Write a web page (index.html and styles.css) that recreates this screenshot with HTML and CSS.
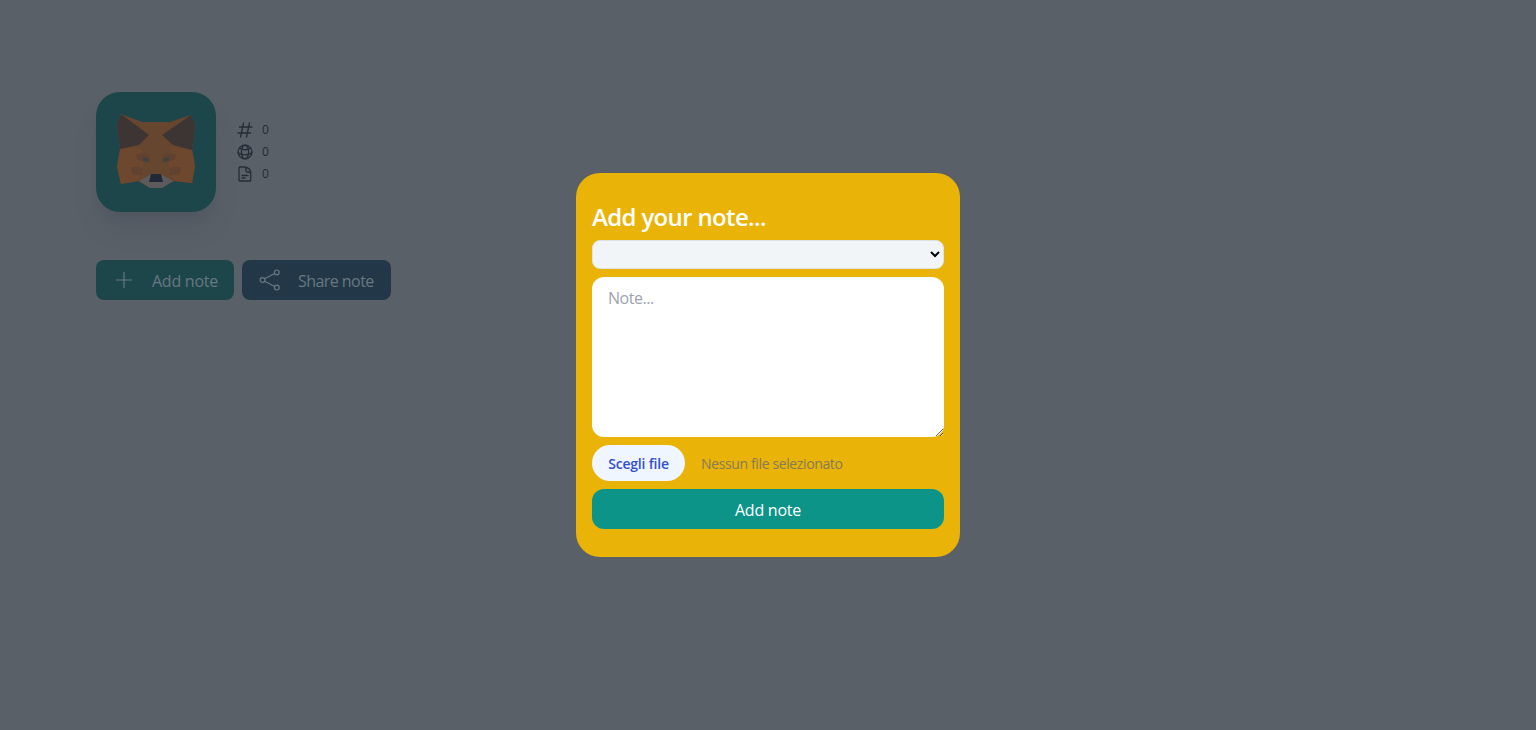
FILE: index.html
```html
<!DOCTYPE html>
<html lang="it">
<head>
<meta charset="utf-8">
<title>Notes</title>
<link rel="stylesheet" href="styles.css">
</head>
<body>
<main class="page">
  <section class="profile">
    <div class="avatar">
      <svg class="fox" viewBox="0 0 80 76">
        <path fill="#67462f" d="M5 1 26 9H54L75 2 79 12 76 37 79 52 76 70 58 68 46 75H34L22 68 5 71 1 54 4 37 1 12Z"/>
        <path fill="#6d482f" d="M4 36 24 34 30 45 22 68 5 71 1 54ZM76 36 56 34 50 45 58 68 76 70 79 54Z"/>
        <path fill="#3d3434" d="M5 1 33 22 23 32 4 36 1 12ZM75 2 46 22 57 32 76 37 79 12Z"/>
        <path fill="#61412f" d="M19 42 31 39 35 49 22 47ZM61 42 49 39 45 49 58 47ZM14 54 25 54 27 62 17 61ZM66 54 55 54 53 62 63 61Z"/>
        <path fill="#3d4142" d="M27 44 33 46 32 49 27 48ZM53 44 47 46 48 49 53 48Z"/>
        <path fill="#5c5a5b" d="M23 68 34 62H46L57 68 46 75H34Z"/>
        <path fill="#202a36" d="M35 61H45L47 69H33Z"/>
      </svg>
    </div>
    <ul class="stats">
      <li><svg class="stat-icon" viewBox="0 0 16 16"><path d="M6.5 1 3.5 15M12.5 1 9.5 15M2.5 5H15M1 11H13.5"/></svg>0</li>
      <li><svg class="stat-icon" viewBox="0 0 16 16"><circle cx="8" cy="8" r="6.9"/><ellipse cx="8" cy="8" rx="3.6" ry="6.9"/><path d="M2.5 4Q8 7.5 13.5 4M1 8.8Q8 13 15 8.8"/></svg>0</li>
      <li><svg class="stat-icon" viewBox="0 0 16 16"><path d="M3 1H7.5Q13.8 1.6 13.8 8V14Q13.8 15 12.8 15H3Q2 15 2 14V2Q2 1 3 1ZM7.5 1Q9 1.5 9 4.5Q9 6 10.5 6Q13.5 6 13.8 8M5 9.5H11M5 12H8"/></svg>0</li>
    </ul>
  </section>
  <div class="actions">
    <button class="action add"><svg class="action-icon" viewBox="0 0 24 24"><path d="M12 4V20M4 12H20"/></svg><span>Add note</span></button>
    <button class="action share"><svg class="action-icon" viewBox="0 0 24 24"><circle cx="4.5" cy="12" r="2.4"/><circle cx="18.8" cy="4.4" r="2.4"/><circle cx="18.8" cy="19.6" r="2.4"/><path d="M6.6 10.8 16.7 5.5M6.6 13.2 16.7 18.5"/></svg><span>Share note</span></button>
  </div>
</main>
<div class="overlay">
  <form class="modal">
    <h2 class="title">Add your note...</h2>
    <select class="note-select"></select>
    <textarea class="note-text" placeholder="Note..."></textarea>
    <div class="file-row">
      <button type="button" class="file-button"><span>Scegli file</span></button>
      <span class="file-name">Nessun file selezionato</span>
    </div>
    <button type="button" class="submit"><span>Add note</span></button>
  </form>
</div>
</body>
</html>
```
FILE: styles.css
```css
* { box-sizing: border-box; }
body { margin: 0; background: #596068; font-family: "Open Sans", "Noto Sans", sans-serif; font-size: 16px; line-height: 24px; overflow: hidden; }
button, textarea, select { font: inherit; border: 0; margin: 0; }
.page { padding: 92px 96px; }
.profile { display: flex; gap: 21px; }
.avatar { width: 120px; height: 120px; border-radius: 24px; background: #1d464a; display: flex; align-items: center; justify-content: center; box-shadow: 0 20px 25px -5px rgba(66, 70, 84, .22), 0 8px 10px -6px rgba(66, 70, 84, .22); }
.fox { width: 80px; height: 76px; margin-top: -2px; }
.stats { list-style: none; margin: 0; padding: 27px 0 0; font-size: 12px; color: #252c37; }
.stats li { display: flex; align-items: center; gap: 9px; height: 22px; line-height: 22px; }
.stat-icon { width: 16px; height: 16px; fill: none; stroke: #252c37; stroke-width: 1.3; stroke-linejoin: round; stroke-linecap: round; }
.actions { display: flex; gap: 8px; margin-top: 48px; }
.action { height: 40px; border-radius: 8px; display: flex; align-items: center; gap: 16px; padding: 1px 0 0 16px; color: #687781; letter-spacing: -.25px; white-space: nowrap; }
.add { width: 138px; background: #1d464a; }
.share { width: 149px; background: #223848; letter-spacing: -.55px; }
.action-icon { width: 24px; height: 24px; flex: none; margin-top: -1px; fill: none; stroke: #687781; stroke-width: 1.2; }
.overlay { position: fixed; inset: 0; display: flex; align-items: center; justify-content: center; }
.modal { width: 384px; height: 384px; border-radius: 24px; background: #eab308; padding: 28px 16px; display: flex; flex-direction: column; gap: 8px; }
.title { margin: 0; color: #fff; font-size: 24px; line-height: 32px; font-weight: 600; letter-spacing: -.65px; }
.note-select { width: 100%; height: 29px; margin-top: -1px; padding-right: 1px; flex: none; border: 1px solid #dfe3e6; border-radius: 8px; background-color: #f1f5f7; color: #000; }
.note-text { display: block; flex: none; width: 100%; height: 160px; padding: 9px 16px 8px; border-radius: 12px; background: #fff; resize: both; letter-spacing: -.45px; }
.note-text::placeholder { color: #9ca3af; }
.file-row { display: flex; align-items: center; gap: 16px; height: 36px; flex: none; font-size: 14px; }
.file-button { width: 93px; height: 36px; border-radius: 18px; padding: 2px 0 0; background: #eff6ff; color: #344fd0; font-weight: 600; letter-spacing: -.2px; }
.file-name { padding-top: 2px; color: #847b57; letter-spacing: -.37px; }
.submit { height: 40px; flex: none; padding: 2px 0 0; border-radius: 12px; background: #0d9488; color: #fff; letter-spacing: -.25px; }
```
